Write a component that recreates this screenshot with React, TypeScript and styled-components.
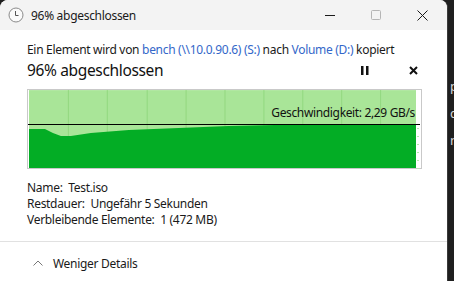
import React from 'react';
import styled, { createGlobalStyle } from 'styled-components';

const FONT = `'Noto Sans', 'Open Sans', 'Liberation Sans', sans-serif`;

const GlobalStyle = createGlobalStyle`
  html, body {
    margin: 0;
    padding: 0;
    background: #1f1f1f;
    overflow: hidden;
  }
  body {
    font-family: ${FONT};
  }
`;

// x positions of the vertical grid lines in the chart
const GRID = [39, 78, 118, 157, 196, 235, 274, 313, 352];

function ClockIcon() {
  return (
    <svg width="16" height="16" viewBox="0 0 16 16">
      <circle cx="8" cy="8" r="7" fill="#fafafa" stroke="#8a8a8a" strokeWidth="1" />
      <path d="M7.5 4v4.5h3" fill="none" stroke="#555" strokeWidth="1" />
    </svg>
  );
}

function SpeedChart() {
  // dark green area: dips a little at the start, then climbs to the current speed
  const area =
    'M0 39 L16 39 L24 43 L32 46 L42 46 L62 43 L100 40 L150 38 L200 36 L246 35 L388 35 L388 78 L0 78 Z';
  return (
    <svg width="388" height="78" viewBox="0 0 388 78">
      <rect x="0" y="0" width="388" height="78" fill="#a9e598" />
      {GRID.map((x) => (
        <line key={x} x1={x + 0.5} y1="0" x2={x + 0.5} y2="78" stroke="#93d87f" strokeWidth="1" />
      ))}
      <path d={area} fill="#03ad25" />
    </svg>
  );
}

export default function App() {
  return (
    <>
      <GlobalStyle />
      <Screen>
        <Window>
          <TitleBar>
            <TitleLeft>
              <ClockIcon />
              <TitleText>96% abgeschlossen</TitleText>
            </TitleLeft>
            <Controls>
              <CtrlButton>
                <svg width="10" height="10" viewBox="0 0 10 10">
                  <line x1="0" y1="5.5" x2="10" y2="5.5" stroke="#1a1a1a" strokeWidth="1" />
                </svg>
              </CtrlButton>
              <CtrlButton>
                <svg width="10" height="10" viewBox="0 0 10 10">
                  <rect x="0.5" y="0.5" width="9" height="9" rx="1" fill="none" stroke="#b5b5b5" strokeWidth="1" />
                </svg>
              </CtrlButton>
              <CtrlButton>
                <svg width="11" height="11" viewBox="0 0 11 11">
                  <path d="M0.5 0.5 L10.5 10.5 M10.5 0.5 L0.5 10.5" stroke="#1a1a1a" strokeWidth="1" />
                </svg>
              </CtrlButton>
            </Controls>
          </TitleBar>

          <Body>
            <Summary>
              Ein Element wird von <LinkText>bench (\\10.0.90.6) (S:)</LinkText> nach{' '}
              <LinkText>Volume (D:)</LinkText> kopiert
            </Summary>
            <ProgressRow>
              <Percent>96% abgeschlossen</Percent>
              <ActionButtons>
                <svg width="8" height="9" viewBox="0 0 8 9">
                  <rect x="0" y="0" width="2.5" height="9" fill="#111" />
                  <rect x="5" y="0" width="2.5" height="9" fill="#111" />
                </svg>
                <svg width="9" height="9" viewBox="0 0 9 9">
                  <path d="M1 1 L8 8 M8 1 L1 8" stroke="#111" strokeWidth="2" />
                </svg>
              </ActionButtons>
            </ProgressRow>

            <ChartFrame>
              <SpeedChart />
              <Ticks>
                {[0, 1, 2, 3, 4, 5].map((i) => (
                  <Tick key={i} />
                ))}
              </Ticks>
              <SpeedLine />
              <SpeedLabel>Geschwindigkeit: 2,29 GB/s</SpeedLabel>
            </ChartFrame>

            <Details>
              <DetailLine>Name:&nbsp; Test.iso</DetailLine>
              <DetailLine>Restdauer:&nbsp; Ungefähr 5 Sekunden</DetailLine>
              <DetailLine>Verbleibende Elemente:&nbsp; 1 (472 MB)</DetailLine>
            </Details>
          </Body>

          <Footer>
            <svg width="10" height="6" viewBox="0 0 10 6">
              <path d="M0.5 5.5 L5 1 L9.5 5.5" fill="none" stroke="#777" strokeWidth="1" />
            </svg>
            <FooterText>Weniger Details</FooterText>
          </Footer>
        </Window>
        <Behind>
          <BehindChar style={{ marginTop: 80 }}>p</BehindChar>
          <BehindChar style={{ marginTop: 14 }}>c</BehindChar>
          <BehindChar style={{ marginTop: 14 }}>n</BehindChar>
        </Behind>
      </Screen>
    </>
  );
}

const Screen = styled.div`
  display: flex;
  width: 454px;
  height: 281px;
  overflow: hidden;
`;

const Window = styled.div`
  width: 447px;
  flex-shrink: 0;
  height: 290px;
  background: #ffffff;
  border-radius: 8px 8px 0 0;
  border-right: 1px solid #3a3a3a;
  overflow: hidden;
  display: flex;
  flex-direction: column;
`;

const Behind = styled.div`
  flex: 1;
  display: flex;
  flex-direction: column;
  padding-left: 2px;
  overflow: hidden;
`;

const BehindChar = styled.span`
  color: #d8d8d8;
  font-size: 13px;
  line-height: 13px;
`;

const TitleBar = styled.div`
  height: 30px;
  flex-shrink: 0;
  background: #f3f3f3;
  display: flex;
  align-items: center;
  justify-content: space-between;
  padding-left: 8px;
`;

const TitleLeft = styled.div`
  display: flex;
  align-items: center;
  gap: 7px;
`;

const TitleText = styled.span`
  font-size: 12px;
  letter-spacing: -0.3px;
  color: #1a1a1a;
`;

const Controls = styled.div`
  display: flex;
  align-items: center;
  margin-right: 2px;
`;

const CtrlButton = styled.div`
  width: 46px;
  height: 30px;
  display: flex;
  align-items: center;
  justify-content: center;
`;

const Body = styled.div`
  padding: 12px 0 0 27px;
  display: flex;
  flex-direction: column;
`;

const Summary = styled.div`
  font-size: 12px;
  line-height: 16px;
  color: #1a1a1a;
  letter-spacing: -0.3px;
`;

const LinkText = styled.span`
  color: #3367c9;
`;

const ProgressRow = styled.div`
  display: flex;
  align-items: center;
  justify-content: space-between;
  margin-top: 1px;
  width: 391px;
`;

const Percent = styled.span`
  font-size: 15.5px;
  line-height: 22px;
  letter-spacing: -0.35px;
  color: #111;
`;

const ActionButtons = styled.div`
  display: flex;
  align-items: center;
  gap: 40px;
`;

const ChartFrame = styled.div`
  position: relative;
  box-sizing: border-box;
  margin-top: 8px;
  width: 395px;
  height: 80px;
  padding: 0 5px 0 1px;
  border: 1px solid #c9c9c9;
  display: flex;
`;

const Ticks = styled.div`
  position: absolute;
  right: 2px;
  top: 38px;
  display: flex;
  flex-direction: column;
  gap: 7px;
`;

const Tick = styled.div`
  width: 2px;
  height: 1px;
  background: #b6e8b0;
`;

const SpeedLine = styled.div`
  position: absolute;
  left: 0;
  right: 1px;
  top: 34px;
  height: 1px;
  background: #000;
`;

const SpeedLabel = styled.span`
  position: absolute;
  right: 6px;
  top: 15px;
  font-size: 12px;
  line-height: 16px;
  letter-spacing: -0.35px;
  color: #111;
`;

const Details = styled.div`
  margin-top: 11px;
  display: flex;
  flex-direction: column;
`;

const DetailLine = styled.div`
  font-size: 12px;
  line-height: 16px;
  letter-spacing: -0.3px;
  color: #1a1a1a;
`;

const Footer = styled.div`
  margin-top: 13px;
  border-top: 1px solid #e1e1e1;
  height: 42px;
  flex-shrink: 0;
  display: flex;
  align-items: center;
  gap: 10px;
  padding-left: 33px;
`;

const FooterText = styled.span`
  font-size: 12px;
  letter-spacing: -0.3px;
  color: #1a1a1a;
`;
